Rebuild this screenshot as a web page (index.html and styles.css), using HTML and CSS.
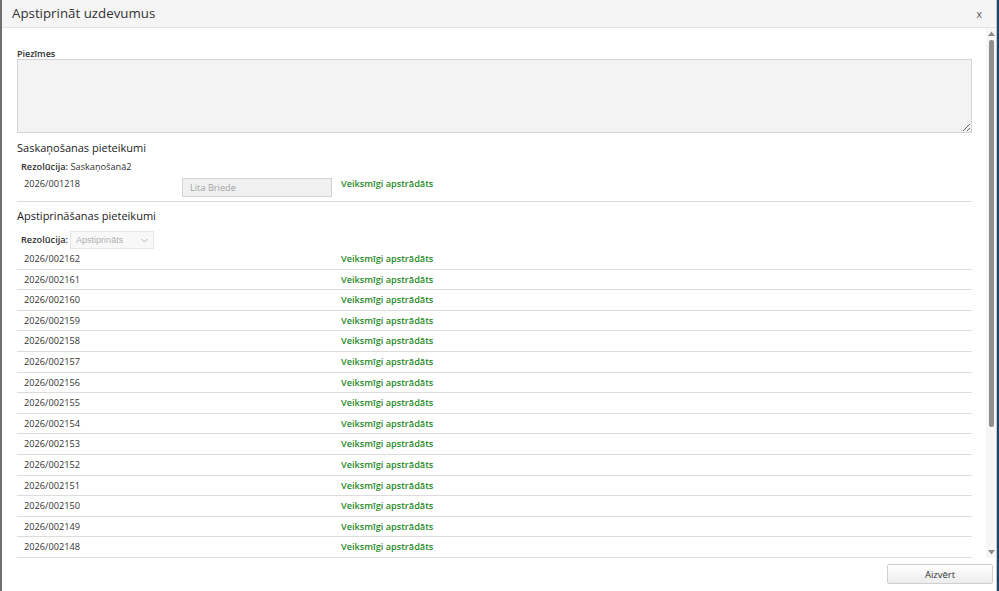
FILE: index.html
```html
<!DOCTYPE html>
<html lang="lv">

<head>
    <meta charset="UTF-8">
    <meta name="viewport" content="width=device-width, initial-scale=1.0">
    <title>Apstiprināt uzdevumus</title>
    <link rel="stylesheet" href="styles.css">
</head>

<body>
    <div class="dialog">
        <!-- virsraksts -->
        <div class="dialog-head">
            <span class="dialog-title">Apstiprināt uzdevumus</span>
            <span class="dialog-close">x</span>
        </div>

        <div class="dialog-body">
            <div class="dialog-content">
                <label class="field-label" for="notes">Piezīmes</label>
                <textarea id="notes" class="notes"></textarea>

                <!-- saskaņošana -->
                <h3 class="section-title section-first">Saskaņošanas pieteikumi</h3>
                <div class="resolution"><b>Rezolūcija:</b> Saskaņošanā2</div>
                <div class="req-row">
                    <span class="req-num">2026/001218</span>
                    <span class="req-user"><input class="user-input" type="text" placeholder="Lita Briede" disabled></span>
                    <span class="req-status">Veiksmīgi apstrādāts</span>
                </div>

                <!-- apstiprināšana -->
                <h3 class="section-title">Apstiprināšanas pieteikumi</h3>
                <div class="resolution resolution-select">
                    <b>Rezolūcija:</b>
                    <span class="select-wrap">
                        <select class="res-select" disabled>
                            <option>Apstiprināts</option>
                        </select>
                        <svg class="select-arrow" width="7" height="5" viewBox="0 0 7 5"><path d="M0.5 1 L3.5 4 L6.5 1" fill="none" stroke="#b5b5b5" stroke-width="1"/></svg>
                    </span>
                </div>

                <div class="req-list">
                    <div class="req-row"><span class="req-num">2026/002162</span><span></span><span class="req-status">Veiksmīgi apstrādāts</span></div>
                    <div class="req-row"><span class="req-num">2026/002161</span><span></span><span class="req-status">Veiksmīgi apstrādāts</span></div>
                    <div class="req-row"><span class="req-num">2026/002160</span><span></span><span class="req-status">Veiksmīgi apstrādāts</span></div>
                    <div class="req-row"><span class="req-num">2026/002159</span><span></span><span class="req-status">Veiksmīgi apstrādāts</span></div>
                    <div class="req-row"><span class="req-num">2026/002158</span><span></span><span class="req-status">Veiksmīgi apstrādāts</span></div>
                    <div class="req-row"><span class="req-num">2026/002157</span><span></span><span class="req-status">Veiksmīgi apstrādāts</span></div>
                    <div class="req-row"><span class="req-num">2026/002156</span><span></span><span class="req-status">Veiksmīgi apstrādāts</span></div>
                    <div class="req-row"><span class="req-num">2026/002155</span><span></span><span class="req-status">Veiksmīgi apstrādāts</span></div>
                    <div class="req-row"><span class="req-num">2026/002154</span><span></span><span class="req-status">Veiksmīgi apstrādāts</span></div>
                    <div class="req-row"><span class="req-num">2026/002153</span><span></span><span class="req-status">Veiksmīgi apstrādāts</span></div>
                    <div class="req-row"><span class="req-num">2026/002152</span><span></span><span class="req-status">Veiksmīgi apstrādāts</span></div>
                    <div class="req-row"><span class="req-num">2026/002151</span><span></span><span class="req-status">Veiksmīgi apstrādāts</span></div>
                    <div class="req-row"><span class="req-num">2026/002150</span><span></span><span class="req-status">Veiksmīgi apstrādāts</span></div>
                    <div class="req-row"><span class="req-num">2026/002149</span><span></span><span class="req-status">Veiksmīgi apstrādāts</span></div>
                    <div class="req-row"><span class="req-num">2026/002148</span><span></span><span class="req-status">Veiksmīgi apstrādāts</span></div>
                </div>
            </div>

            <!-- ritjosla -->
            <div class="scrollbar">
                <svg class="scroll-btn" width="7" height="5" viewBox="0 0 7 5"><path d="M0 5 L3.5 0.5 L7 5 Z" fill="#8a8a8a"/></svg>
                <div class="scroll-track">
                    <div class="scroll-thumb"></div>
                </div>
                <svg class="scroll-btn" width="7" height="5" viewBox="0 0 7 5"><path d="M0 0 L3.5 4.5 L7 0 Z" fill="#8a8a8a"/></svg>
            </div>
        </div>

        <div class="dialog-foot">
            <button class="btn" type="button">Aizvērt</button>
        </div>
    </div>
</body>

</html>
```

FILE: styles.css
```css
* {
    margin: 0;
    padding: 0;
    box-sizing: border-box;
}

body {
    background-color: #17466f;
    font-family: "Open Sans", "Liberation Sans", sans-serif;
    color: #333;
    height: 591px;
    overflow: hidden;
}

.dialog {
    width: 997px;
    height: 591px;
    background-color: #fff;
    border-left: 2px solid #6f6f6f;
    border-right: 1px solid #c8c8c8;
    display: flex;
    flex-direction: column;
}

.dialog-head {
    height: 28px;
    background-color: #f5f5f5;
    border-bottom: 1px solid #e3e3e3;
    display: flex;
    align-items: center;
    justify-content: space-between;
    padding: 0 14px 0 10px;
}

.dialog-title {
    font-size: 13.3px;
    color: #333;
    padding-bottom: 1px;
}

.dialog-close {
    font-size: 10.5px;
    color: #555;
}

.dialog-body {
    height: 530px;
    display: flex;
}

.dialog-content {
    flex: 1;
    overflow: hidden;
    padding: 20px 14px 0 15px;
}

.field-label {
    display: block;
    font-size: 9px;
    font-weight: 600;
    line-height: 11px;
    color: #333;
}

.notes {
    display: block;
    width: 100%;
    height: 74px;
    background-color: #f3f3f3;
    border: 1px solid #d4d4d4;
    resize: vertical;
}

.section-title {
    font-size: 11px;
    font-weight: 500;
    line-height: 16px;
    margin-top: 6px;
    color: #222;
}

.section-first {
    margin-top: 7px;
}

.resolution {
    font-size: 9.2px;
    line-height: 14px;
    padding-left: 4px;
    margin-top: 4px;
}

.resolution b {
    font-weight: 600;
}

.resolution-select {
    display: flex;
    align-items: center;
    gap: 2px;
    margin-top: 7px;
    height: 18px;
}

.select-wrap {
    position: relative;
    display: flex;
}

.res-select {
    appearance: none;
    width: 84px;
    height: 18px;
    border: 1px solid #e6e6e6;
    background-color: #f8f8f8;
    color: #b0b0b0;
    font-family: "Liberation Sans", Arial, sans-serif;
    font-size: 9px;
    padding-left: 5px;
    opacity: 1;
}

.select-arrow {
    position: absolute;
    right: 6px;
    top: 7px;
}

.req-row {
    display: grid;
    grid-template-columns: 158px 159px 1fr;
    align-items: start;
    font-size: 9.2px;
    line-height: 14px;
    padding: 2px 7px 4px;
    margin-top: 1px;
    border-bottom: 1px solid #dcdcdc;
}

.req-list .req-row {
    margin-top: 0;
    height: 20.6px;
    padding: 3px 7px 0;
}

.req-num {
    color: #333;
}

.user-input {
    display: block;
    width: 150px;
    height: 19px;
    margin-top: 1px;
    border: 1px solid #d2d2d2;
    background-color: #f0f0f0;
    font-family: "Open Sans", "Liberation Sans", sans-serif;
    font-size: 9.2px;
    padding-left: 7px;
}

.user-input::placeholder {
    color: #a2a2a2;
}

.req-status {
    color: #1f8a1f;
    font-weight: 600;
}

.scrollbar {
    width: 10px;
    background-color: #f6f6f6;
    display: flex;
    flex-direction: column;
    align-items: center;
    padding: 3px 0 3px;
}

.scroll-btn {
    flex: none;
    margin-left: 1px;
}

.scroll-track {
    flex: 1;
    width: 100%;
    padding: 4px 2px 0 3px;
}

.scroll-thumb {
    height: 387px;
    background-color: #8f8f8f;
    border-radius: 2px;
}

.dialog-foot {
    flex: 1;
    display: flex;
    justify-content: flex-end;
    align-items: flex-start;
    padding: 6px 3px 0 0;
}

.btn {
    width: 106px;
    height: 20px;
    border: 1px solid #cfcfcf;
    border-radius: 2px;
    background: linear-gradient(#ffffff, #ececec);
    font-family: "Open Sans", "Liberation Sans", sans-serif;
    font-size: 9.5px;
    color: #333;
}
```
